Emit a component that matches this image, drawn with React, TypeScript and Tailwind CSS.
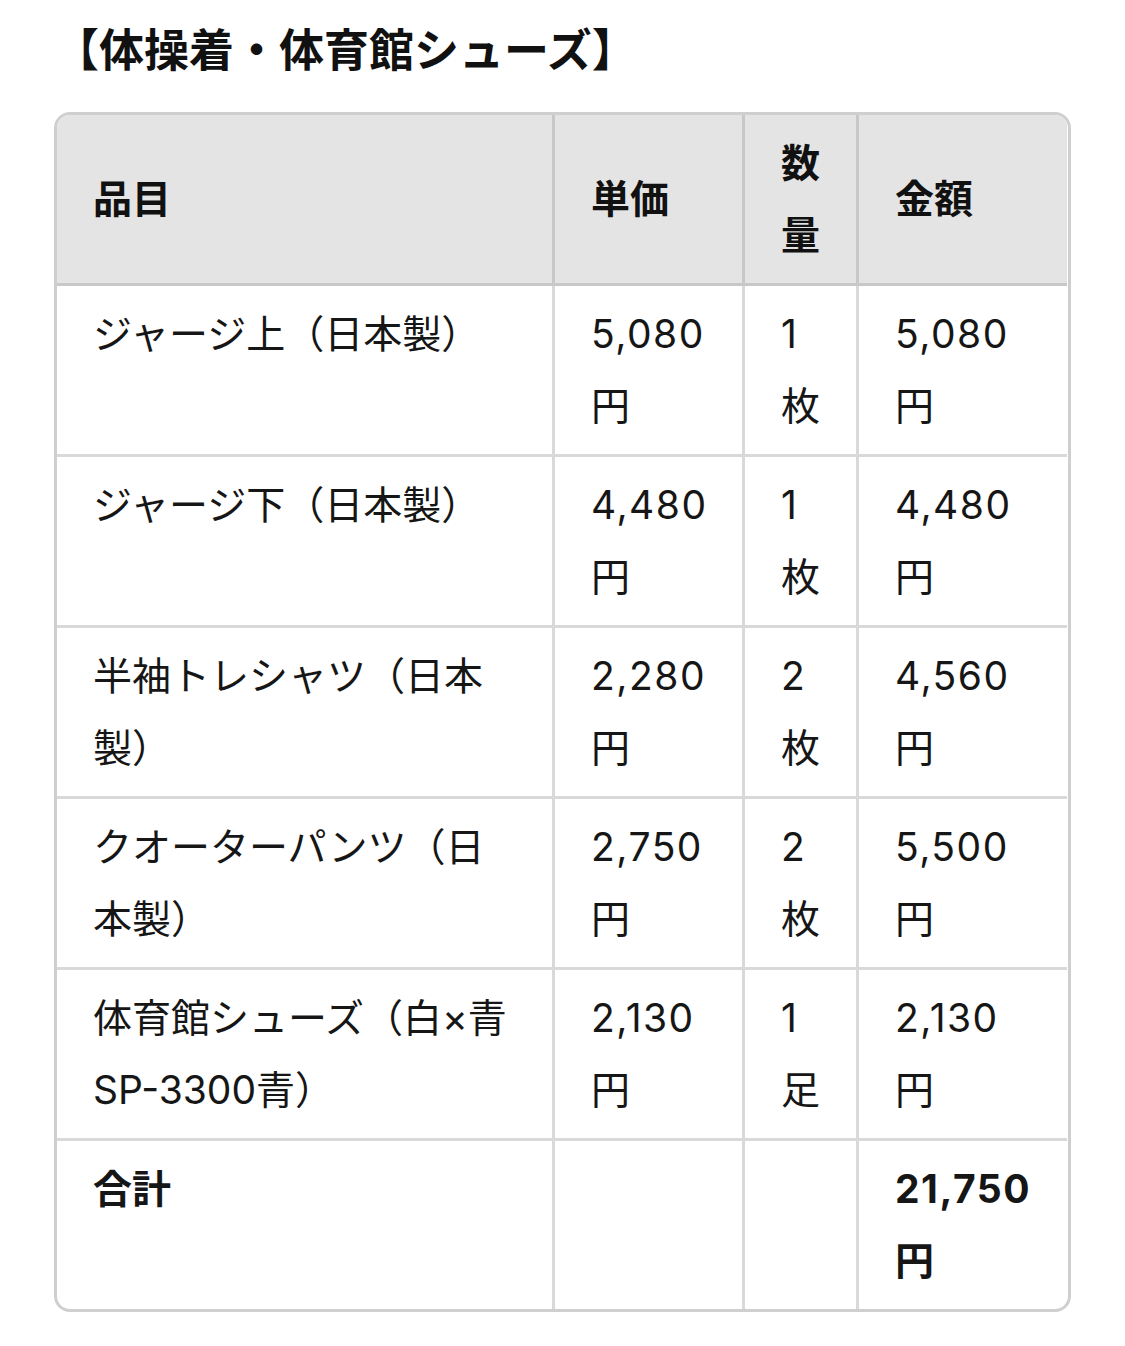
const FONT = "font-['Inter','Noto_Sans_CJK_JP',sans-serif]";

const ROWS = [
  { name: "ジャージ上（日本製）", price: "5,080円", qty: "1枚", total: "5,080円" },
  { name: "ジャージ下（日本製）", price: "4,480円", qty: "1枚", total: "4,480円" },
  { name: "半袖トレシャツ（日本製）", price: "2,280円", qty: "2枚", total: "4,560円" },
  { name: "クオーターパンツ（日本製）", price: "2,750円", qty: "2枚", total: "5,500円" },
  { name: "体育館シューズ（白×青SP-3300青）", price: "2,130円", qty: "1足", total: "2,130円" },
];

const head = "flex items-center bg-[#e4e4e4] px-[36px] py-[12px] font-bold text-[#111]";
const cell = "px-[36px] py-[12px] text-[#161616]";
const num = "tracking-[1.5px]";
const line = "border-r-[3px] border-[#d9d9d9]";
const hline = "border-r-[3px] border-[#c8c8c8]";

export default function App() {
  return (
    <div className={`${FONT} min-h-[1346px] bg-white px-[54px] pt-[21px]`}>
      <h2 className="mb-[31px] text-[45px] font-bold leading-[60px] text-[#111]">【体操着・体育館シューズ】</h2>
      <div className="overflow-hidden rounded-[16px] border-[3px] border-[#cfcfcf]">
        <div className="grid grid-cols-[498px_190px_114px_208px] text-[39px] leading-[72px]">
          <div className={`${head} ${hline} border-b-[3px]`}>品目</div>
          <div className={`${head} ${hline} border-b-[3px]`}>単価</div>
          <div className={`${head} ${hline} border-b-[3px] break-all`}>数量</div>
          <div className={`${head} border-b-[3px] border-[#c8c8c8]`}>金額</div>

          {ROWS.map((r) => (
            <div key={r.name} className="contents">
              <div className={`${cell} ${line} border-b-[3px]`}>{r.name}</div>
              <div className={`${cell} ${num} ${line} border-b-[3px]`}>{r.price}</div>
              <div className={`${cell} ${num} ${line} border-b-[3px] break-all`}>{r.qty}</div>
              <div className={`${cell} ${num} border-b-[3px] border-[#d9d9d9]`}>{r.total}</div>
            </div>
          ))}

          <div className={`${cell} ${line} font-bold`}>合計</div>
          <div className={`${cell} ${line}`}></div>
          <div className={`${cell} ${line}`}></div>
          <div className={`${cell} ${num} font-bold`}>21,750円</div>
        </div>
      </div>
    </div>
  );
}
